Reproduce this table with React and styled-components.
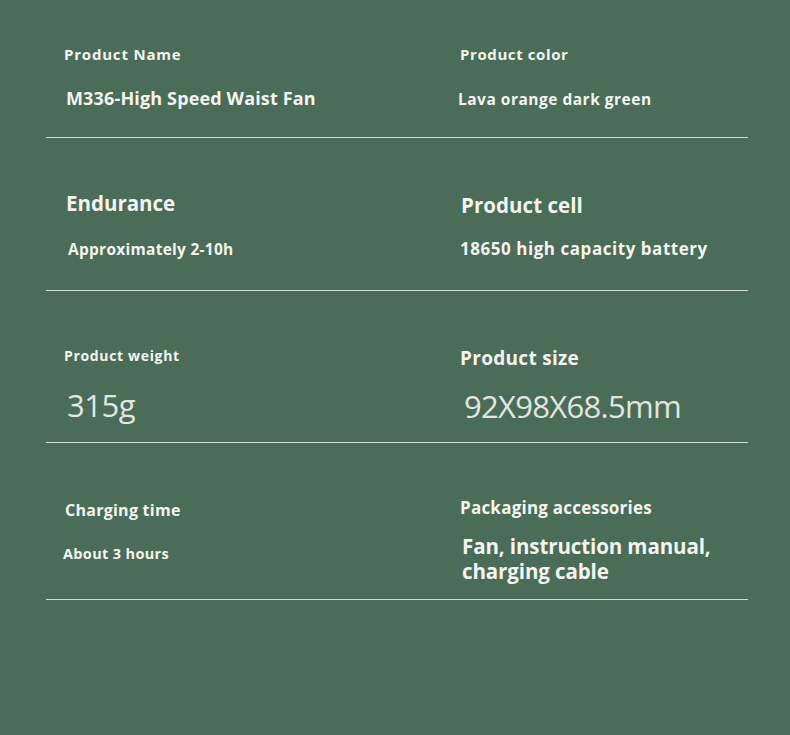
import React from 'react';
import styled, { createGlobalStyle } from 'styled-components';

const GlobalStyle = createGlobalStyle`
  html, body {
    margin: 0;
    padding: 0;
    background: #4a6c58;
  }
  body {
    font-family: "Open Sans", "Noto Sans", sans-serif;
    color: #f3f4ef;
  }
`;

// ls/lt = label size/tracking, vs/vt = value size/tracking
const specs = [
  {
    h: 138,
    cells: [
      { label: 'Product Name', ls: 15, lh: 20, lt: 0.8, top: 44, value: 'M336-High Speed Waist Fan', vs: 18, vh: 24, vt: 0.15, gap: 22, vx: 2 },
      { label: 'Product color', ls: 15, lh: 20, lt: 0.6, top: 44, value: 'Lava orange dark green', vs: 15.5, vh: 22, vt: 0.5, gap: 24, vx: -2 },
    ],
  },
  {
    h: 153,
    cells: [
      { label: 'Endurance', ls: 20.5, lh: 28, lt: 0, top: 51, value: 'Approximately 2-10h', vs: 15.5, vh: 22, vt: 0.27, gap: 21, lx: 2, vx: 4 },
      { label: 'Product cell', ls: 20.5, lh: 28, lt: 0.05, top: 53, value: '18650 high capacity battery', vs: 17, vh: 22, vt: 0.54, gap: 19, lx: 1 },
    ],
  },
  {
    h: 152,
    cells: [
      { label: 'Product weight', ls: 14, lh: 20, lt: 0.66, top: 55, value: '315g', vs: 31, vh: 40, vt: -0.45, gap: 19, thin: true, vx: 3 },
      { label: 'Product size', ls: 19, lh: 26, lt: 0.3, top: 54, value: '92X98X68.5mm', vs: 31, vh: 40, vt: -0.7, gap: 15, thin: true, vx: 4 },
    ],
  },
  {
    h: 157,
    cells: [
      { label: 'Charging time', ls: 16, lh: 22, lt: 0.26, top: 56, value: 'About 3 hours', vs: 14.5, vh: 20, vt: 0.34, gap: 23, lx: 1, vx: -1 },
      { label: 'Packaging accessories', ls: 17, lh: 22, lt: 0.23, top: 54, value: 'Fan, instruction manual,\ncharging cable', vs: 20.5, vh: 25, vt: -0.1, gap: 15, vx: 2 },
    ],
  },
];

function App() {
  return (
    <>
      <GlobalStyle />
      <Page>
        <Table>
          {specs.map((row, i) => (
            <Row key={i} $h={row.h}>
              {row.cells.map((c) => (
                <Cell key={c.label} $top={c.top}>
                  <Label $size={c.ls} $lh={c.lh} $track={c.lt} $x={c.lx || 0}>
                    {c.label}
                  </Label>
                  <Value
                    $size={c.vs}
                    $lh={c.vh}
                    $track={c.vt}
                    $gap={c.gap}
                    $x={c.vx || 0}
                    $thin={c.thin}
                  >
                    {c.value}
                  </Value>
                </Cell>
              ))}
            </Row>
          ))}
        </Table>
      </Page>
    </>
  );
}

const Page = styled.div`
  width: 790px;
  height: 735px;
  background: #4a6c58;
  padding: 0 42px 0 46px;
  box-sizing: border-box;
`;

const Table = styled.div`
  display: flex;
  flex-direction: column;
`;

const Row = styled.div`
  display: grid;
  grid-template-columns: 396px 1fr;
  height: ${(p) => p.$h}px;
  box-sizing: border-box;
  border-bottom: 1px solid #d3ddd5;
  padding-left: 18px;
`;

const Cell = styled.div`
  padding-top: ${(p) => p.$top}px;
  display: flex;
  flex-direction: column;
  align-items: flex-start;
`;

const Label = styled.div`
  font-size: ${(p) => p.$size}px;
  line-height: ${(p) => p.$lh}px;
  font-weight: 700;
  letter-spacing: ${(p) => p.$track}px;
  margin-left: ${(p) => p.$x}px;
  white-space: nowrap;
`;

const Value = styled.div`
  font-size: ${(p) => p.$size}px;
  line-height: ${(p) => p.$lh}px;
  font-weight: ${(p) => (p.$thin ? 400 : 700)};
  color: ${(p) => (p.$thin ? '#e2e6e1' : '#f3f4ef')};
  letter-spacing: ${(p) => p.$track}px;
  margin-top: ${(p) => p.$gap}px;
  margin-left: ${(p) => p.$x}px;
  white-space: pre-line;
`;

export default App;
